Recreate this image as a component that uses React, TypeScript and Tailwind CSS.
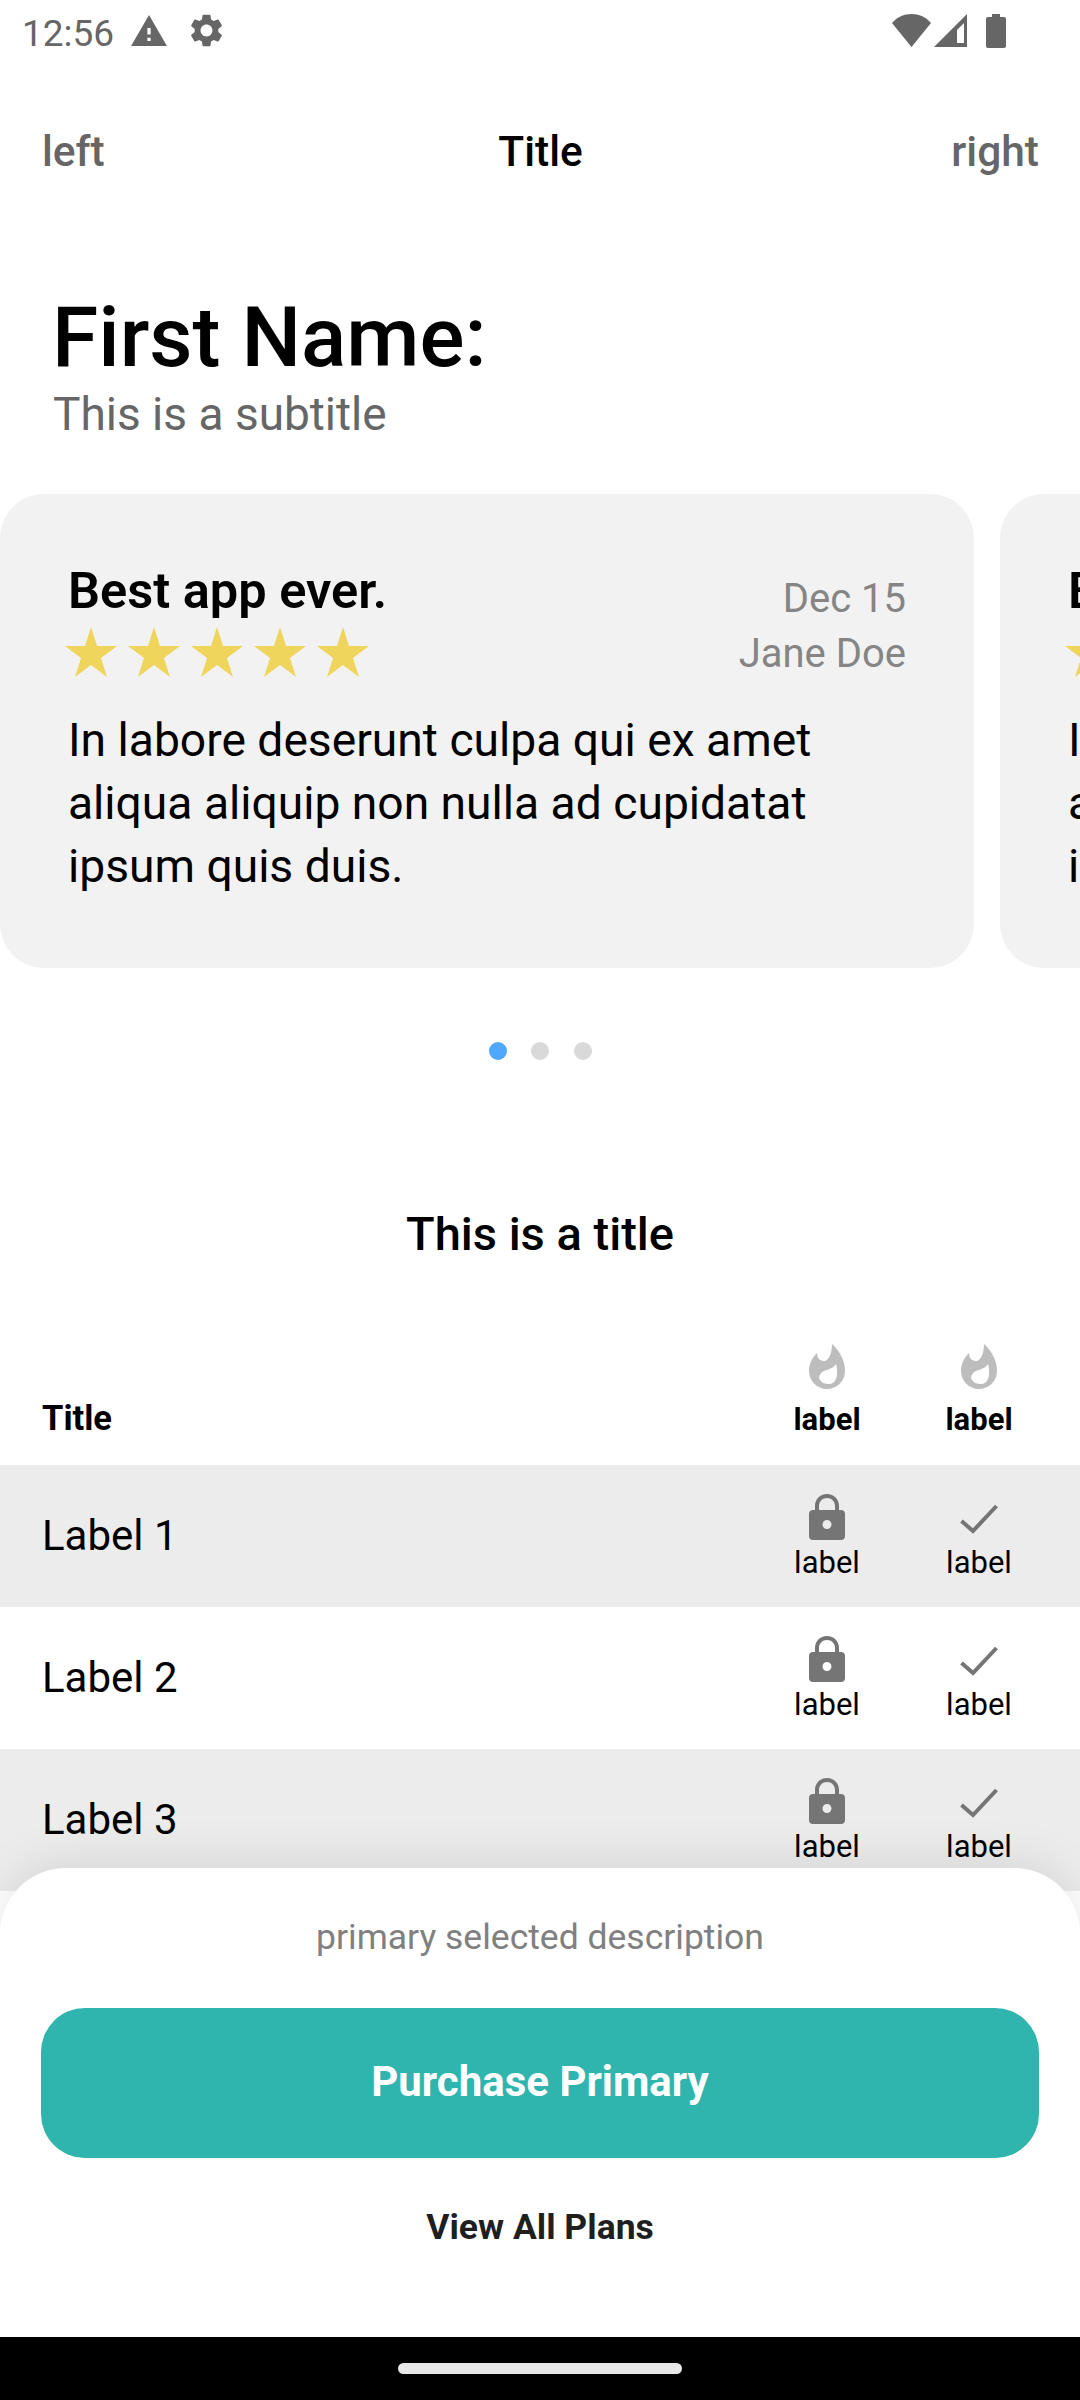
const roboto = "font-['Roboto',sans-serif]";

const rows = ["Label 1", "Label 2", "Label 3"];

function Flame() {
  return (
    <svg viewBox="0 0 36 45" className="h-[45px] w-[36px] text-[#bdbdbd]" fill="currentColor">
      <path
        fillRule="evenodd"
        d="M23 0C32 8 36 18 36 27C36 37 28 45 18 45C8 45 0 37 0 27C0 20 3 14 8 9C8 14 11 17 15 17C20 17 23 9 23 0ZM27 20C25 24 20 25 15 27C11 29 9 33 11 36C13 39 16 40 20 40C25 40 28 35 28 30C28 26 28 23 27 20Z"
      />
    </svg>
  );
}

function Lock() {
  return (
    <svg viewBox="0 0 36 46" className="h-[46px] w-[36px] text-[#757575]" fill="currentColor">
      <path
        fillRule="evenodd"
        d="M18 0C25 0 30 5 30 12V16H32C34.5 16 36 17.5 36 20V42C36 44.5 34.5 46 32 46H4C1.500 46 0 44.500 0 42V20C0 17.500 1.500 16 4 16H6V12C6 5 11 0 18 0ZM18 4C13.500 4 10 7.500 10 12V16H26V12C26 7.500 22.500 4 18 4ZM18 26C15.500 26 13.500 28 13.500 30.500C13.500 33 15.500 35 18 35C20.500 35 22.500 33 22.500 30.500C22.500 28 20.500 26 18 26Z"
      />
    </svg>
  );
}

function Check() {
  return (
    <svg viewBox="0 0 38 46" className="h-[46px] w-[38px] text-[#757575]" fill="none" stroke="currentColor" strokeWidth="4">
      <path d="M1.500 27L13 37L36.500 12" />
    </svg>
  );
}

function Star() {
  return (
    <svg viewBox="0 0 52 50" className="h-[50px] w-[52px] text-[#f0d55c]" fill="currentColor">
      <path d="M26 0L32 19H52L36 31L42 50L26 38L10 50L16 31L0 19H20Z" />
    </svg>
  );
}

function Cell({ children }: { children: React.ReactNode }) {
  return (
    <div className="flex w-[152px] flex-col items-center">
      <div className="flex h-[46px] items-center justify-center">{children}</div>
      <span className="mt-[5px] text-[31px] leading-[36px] text-black">label</span>
    </div>
  );
}

function ReviewCard() {
  return (
    <div className="h-[474px] w-[974px] shrink-0 rounded-[44px] bg-[#f2f2f2] pt-[68px] pr-[68px] pl-[68px]">
      <div className="flex justify-between">
        <div>
          <h3 className="text-[50.500px] leading-[58px] font-semibold text-black">Best app ever.</h3>
          <div className="mt-[7px] -ml-[3px] flex gap-[11px]">
            <Star />
            <Star />
            <Star />
            <Star />
            <Star />
          </div>
        </div>
        <div className="pt-[9px] text-right text-[40px] leading-[55px] text-[#858585]">
          <p>Dec 15</p>
          <p>Jane Doe</p>
        </div>
      </div>
      <p className="mt-[28px] text-[46.200px] leading-[63px] whitespace-nowrap text-black">
        In labore deserunt culpa qui ex amet
        <br />
        aliqua aliquip non nulla ad cupidatat
        <br />
        ipsum quis duis.
      </p>
    </div>
  );
}

export default function App() {
  return (
    <div className={`relative h-[2400px] w-[1080px] overflow-hidden bg-white ${roboto}`}>
      {/* status bar */}
      <div className="flex h-[63px] items-start pt-[14px] text-[#666666]">
        <span className="mt-[1px] ml-[22px] text-[37px] leading-[38px]">12:56</span>
        <svg viewBox="1 2 22 19" className="mt-[1px] ml-[17px] h-[31px] w-[36px]" fill="currentColor">
          <path d="M1 21h22L12 2 1 21zm12-3h-2v-2h2v2zm0-4h-2v-4h2v4z" />
        </svg>
        <svg viewBox="2 2 20 20" className="ml-[23px] h-[33px] w-[33px]" fill="currentColor">
          <path d="M19.140 12.940c.04-.3.06-.61.06-.94 0-.32-.02-.64-.07-.94l2.030-1.580a.49.49 0 0 0 .12-.61l-1.920-3.320a.488.488 0 0 0-.59-.22l-2.390.96c-.5-.38-1.030-.7-1.620-.94l-.36-2.540a.484.484 0 0 0-.48-.41h-3.840c-.24 0-.43.17-.47.41l-.36 2.540c-.59.24-1.130.57-1.620.94l-2.390-.96c-.22-.08-.47 0-.59.22L2.740 8.870c-.12.21-.08.47.12.61l2.030 1.580c-.05.3-.09.63-.09.94s.02.64.07.94l-2.030 1.580a.49.49 0 0 0-.12.61l1.920 3.320c.12.22.37.29.59.22l2.390-.96c.5.38 1.030.7 1.620.94l.36 2.540c.05.24.24.41.48.41h3.840c.24 0 .44-.17.47-.41l.36-2.540c.59-.24 1.130-.56 1.620-.94l2.390.96c.22.08.47 0 .59-.22l1.920-3.320c.12-.22.07-.47-.12-.61l-2.010-1.580zM12 15.600c-1.980 0-3.600-1.620-3.600-3.600s1.620-3.600 3.600-3.600 3.600 1.620 3.600 3.600-1.620 3.600-3.600 3.600z" />
        </svg>
        <div className="flex-1" />
        <svg viewBox="0 0 39 33" className="h-[33px] w-[39px]" fill="currentColor">
          <path d="M0 9C5 3 12 0 19.500 0C27 0 34 3 39 9L19.500 33Z" />
        </svg>
        <svg viewBox="0 0 33 33" className="ml-[3px] h-[33px] w-[33px]" fill="currentColor">
          <path fillRule="evenodd" d="M33 0V33H0ZM30 9L23 16V29H30Z" />
        </svg>
        <svg viewBox="0 0 20 34" className="mr-[74px] ml-[19px] h-[34px] w-[20px]" fill="currentColor">
          <path d="M6 0H14V3H18C19.200 3 20 3.800 20 5V32C20 33.200 19.200 34 18 34H2C.8 34 0 33.200 0 32V5C0 3.800.8 3 2 3H6Z" />
        </svg>
      </div>

      {/* nav bar */}
      <div className="mt-[45px] grid h-[88px] grid-cols-3 items-center pr-[41px] pl-[42px] text-[42.500px] font-medium text-[#666666]">
        <span>left</span>
        <span className="text-center text-black">Title</span>
        <span className="text-right">right</span>
      </div>

      {/* heading */}
      <div className="pt-[94px] pl-[53px]">
        <h1 className="-ml-[1px] text-[84px] leading-[96px] font-medium text-black">First Name:</h1>
        <p className="mt-[2px] text-[46px] leading-[52px] text-[#666666]">This is a subtitle</p>
      </div>

      {/* review carousel */}
      <div className="mt-[54px] flex gap-[26px] overflow-hidden">
        <ReviewCard />
        <ReviewCard />
      </div>
      <div className="mt-[74px] flex justify-center gap-[24.500px]">
        <span className="h-[18px] w-[18px] rounded-full bg-[#4fa8ff]" />
        <span className="h-[18px] w-[18px] rounded-full bg-[#d9d9d9]" />
        <span className="h-[18px] w-[18px] rounded-full bg-[#d9d9d9]" />
      </div>

      <h2 className="mt-[144px] text-center text-[47px] leading-[60px] font-medium text-black">This is a title</h2>

      {/* comparison table */}
      <div className="flex items-end pt-[80px] pr-[25px] pb-[27px] pl-[42px]">
        <span className="flex-1 text-[34.500px] leading-[40px] font-bold text-black">Title</span>
        {[0, 1].map((col) => (
          <div key={col} className="flex w-[152px] flex-col items-center">
            <Flame />
            <span className="mt-[13px] text-[31px] leading-[36px] font-bold text-black">label</span>
          </div>
        ))}
      </div>
      {rows.map((label, i) => (
        <div
          key={label}
          className={`flex h-[142px] pt-[29px] pr-[25px] pl-[42px] ${i % 2 === 0 ? "bg-[#ececec]" : "bg-white"}`}
        >
          <span className="flex-1 pt-[18px] text-[42px] leading-[48px] text-black">{label}</span>
          <Cell>
            <Lock />
          </Cell>
          <Cell>
            <Check />
          </Cell>
        </div>
      ))}

      {/* bottom sheet over the table */}
      <div className="absolute inset-x-0 bottom-0">
        <div className="flex h-[469px] flex-col items-center rounded-t-[66px] bg-white px-[41px] pt-[47px] shadow-[0_-4px_50px_rgba(0,0,0,0.1)]">
          <p className="text-[35.500px] leading-[44px] text-[#808080]">primary selected description</p>
          <button className="mt-[49px] h-[150px] w-[998px] shrink-0 rounded-[44px] bg-[#2fb5ad] pb-[4px] text-[42px] font-bold text-white">
            Purchase Primary
          </button>
          <span className="mt-[49px] text-[35.500px] leading-[40px] font-bold text-[#1f1f1f]">View All Plans</span>
        </div>
        <div className="flex h-[63px] items-start justify-center bg-black pt-[26px]">
          <span className="h-[11px] w-[284px] rounded-full bg-[#e8e8e8]" />
        </div>
      </div>
    </div>
  );
}
